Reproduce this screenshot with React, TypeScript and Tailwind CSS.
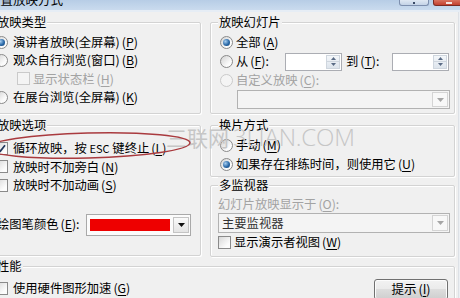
import React from "react";

const M = ({ k }: { k: string }) => (
  <span className="ml-[2px]">
    (<span className="underline underline-offset-2">{k}</span>)
  </span>
);

function Radio({ checked = false, disabled = false }: { checked?: boolean; disabled?: boolean }) {
  return (
    <span
      className={`flex h-[13px] w-[13px] shrink-0 items-center justify-center rounded-full border ${
        disabled
          ? "border-[#cacaca] bg-[#f4f4f4]"
          : "border-[#8a8a8a] bg-[linear-gradient(135deg,#d2d2d2,#fbfbfb_70%)]"
      }`}
    >
      {checked && (
        <span className="h-[7px] w-[7px] rounded-full bg-[radial-gradient(circle_at_35%_35%,#a6cdef,#2a69a8_55%,#123e6c)]" />
      )}
    </span>
  );
}

function Check({ checked = false, disabled = false }: { checked?: boolean; disabled?: boolean }) {
  return (
    <span
      className={`flex h-[13px] w-[13px] shrink-0 items-center justify-center border ${
        disabled
          ? "border-[#cacaca] bg-[#f4f4f4]"
          : "border-[#8a8a8a] bg-[linear-gradient(135deg,#d8d8d8,#fcfcfc_75%)]"
      }`}
    >
      {checked && (
        <svg width="9" height="9" viewBox="0 0 9 9">
          <path d="M1 4.6L3.4 7.2L8 1.2" fill="none" stroke="#22375c" strokeWidth="1.7" />
        </svg>
      )}
    </span>
  );
}

function Group({
  label,
  className = "",
  children,
}: {
  label: string;
  className?: string;
  children?: React.ReactNode;
}) {
  return (
    <div
      className={`relative shrink-0 rounded-[2px] border border-[#d3d3d3] shadow-[inset_1px_1px_0_#ffffff,1px_1px_0_#ffffff] ${className}`}
    >
      <span className="absolute left-[7px] top-[-9px] bg-[#f0f0f0] px-[1px] leading-[17px] text-black">
        {label}
      </span>
      {children}
    </div>
  );
}

function Spinner() {
  return (
    <div className="flex h-[18px] w-[57px] shrink-0 border border-[#abadb3] bg-white p-[1px]">
      <div className="flex-1" />
      <div className="flex w-[14px] flex-col border border-[#cfd6de] bg-[linear-gradient(#f4f7fa,#dde4ec)]">
        <div className="flex flex-1 items-center justify-center border-b border-[#cfd6de]">
          <svg width="5" height="3" viewBox="0 0 5 3">
            <path d="M0 3L2.5 0L5 3Z" fill="#5a6b85" />
          </svg>
        </div>
        <div className="flex flex-1 items-center justify-center">
          <svg width="5" height="3" viewBox="0 0 5 3">
            <path d="M0 0L2.5 3L5 0Z" fill="#5a6b85" />
          </svg>
        </div>
      </div>
    </div>
  );
}

function Combo({ text = "", className = "" }: { text?: string; className?: string }) {
  return (
    <div className={`flex items-center border border-[#b2b2b2] bg-[#f4f4f4] p-[1px] ${className}`}>
      <span className="flex-1 pl-[2px] leading-[15px] text-[#333333]">{text}</span>
      <span className="flex h-full w-[16px] items-center justify-center border border-[#d4d4d4] bg-[#f8f8f8]">
        <svg width="7" height="4" viewBox="0 0 7 4">
          <path d="M0 0L3.5 4L7 0Z" fill="#a6a6a6" />
        </svg>
      </span>
    </div>
  );
}

export default function App() {
  const dis = "text-[#a3a3a3]";
  return (
    <div className="relative flex h-[298px] w-[460px] flex-col overflow-hidden bg-[#f0f0f0] font-['Noto_Sans_CJK_SC','Noto_Sans',sans-serif] text-[12.3px] text-black">
      {/* title bar */}
      <div className="flex h-[10px] shrink-0 overflow-hidden bg-[linear-gradient(#b7cde6,#cadbee)]">
        <span className="ml-[-12px] mt-[-7px] whitespace-nowrap text-[12.5px] leading-[13px]">设置放映方式</span>
        <div className="ml-auto mr-[-4px] flex gap-[4px]">
          <div className="flex h-[6px] w-[30px] items-end justify-center rounded-b-[3px] border border-t-0 border-[#7d8fae] bg-[linear-gradient(#dfe8f3,#c4d3e6)]">
            <span className="mb-[1px] h-[2px] w-[2px] bg-[#3a4a66]" />
          </div>
          <div className="flex h-[6px] w-[31px] items-end justify-center rounded-b-[3px] border border-t-0 border-[#7a2a22] bg-[linear-gradient(#d9725f,#c2402f)]">
            <span className="mb-[1px] h-[2px] w-[6px] bg-[#f5e4e0]" />
          </div>
        </div>
      </div>
      <div className="h-[2px] shrink-0 bg-[#e6edf5]" />

      <div className="flex flex-1">
        <div className="flex w-[458px] shrink-0 flex-col">
          {/* two columns */}
          <div className="ml-[-12px] mt-[10px] flex gap-[9px]">
            {/* left column */}
            <div className="flex w-[213px] shrink-0 flex-col">
              <Group label="放映类型" className="h-[92px]">
                <div className="flex flex-col pl-[6px] pt-[10px]">
                  <div className="flex h-[18.3px] items-center gap-[5px] whitespace-nowrap">
                    <Radio checked />
                    <span>
                      演讲者放映(全屏幕)
                      <M k="P" />
                    </span>
                  </div>
                  <div className="flex h-[18.3px] items-center gap-[5px] whitespace-nowrap">
                    <Radio />
                    <span>
                      观众自行浏览(窗口)
                      <M k="B" />
                    </span>
                  </div>
                  <div className="ml-[22px] flex h-[18.3px] items-center gap-[3px] whitespace-nowrap">
                    <Check disabled />
                    <span className={dis}>
                      显示状态栏
                      <M k="H" />
                    </span>
                  </div>
                  <div className="flex h-[18.3px] items-center gap-[5px] whitespace-nowrap">
                    <Radio />
                    <span>
                      在展台浏览(全屏幕)
                      <M k="K" />
                    </span>
                  </div>
                </div>
              </Group>

              <Group label="放映选项" className="mt-[11px] h-[131px]">
                <div className="flex flex-col pl-[6px] pt-[13px]">
                  <div className="flex h-[18.5px] items-center gap-[5px] whitespace-nowrap">
                    <Check checked />
                    <span>
                      循环放映，按 <span className="text-[11px]">ESC</span> 键终止
                      <M k="L" />
                    </span>
                  </div>
                  <div className="flex h-[18.5px] items-center gap-[5px] whitespace-nowrap">
                    <Check />
                    <span>
                      放映时不加旁白
                      <M k="N" />
                    </span>
                  </div>
                  <div className="flex h-[18.5px] items-center gap-[5px] whitespace-nowrap">
                    <Check />
                    <span>
                      放映时不加动画
                      <M k="S" />
                    </span>
                  </div>
                  <div className="mt-[19px] flex h-[22px] items-center whitespace-nowrap">
                    <span className="ml-[2px] w-[89px]">
                      绘图笔颜色
                      <M k="E" />:
                    </span>
                    <div className="flex h-[22px] w-[105px] items-center border border-[#a9a9a9] bg-[#fbfbfb] pl-[3px] pr-[1px]">
                      <div className="h-[12px] w-[80px] bg-[#ee0000]" />
                      <div className="ml-auto flex h-[16px] w-[16px] items-center justify-center border border-[#c4c4c4] bg-[linear-gradient(#fafafa,#e4e4e4)]">
                        <svg width="7" height="4" viewBox="0 0 7 4">
                          <path d="M0 0L3.5 4L7 0Z" fill="#111111" />
                        </svg>
                      </div>
                    </div>
                  </div>
                </div>
              </Group>
            </div>

            {/* right column */}
            <div className="flex w-[245px] shrink-0 flex-col">
              <Group label="放映幻灯片" className="h-[92px]">
                <div className="flex flex-col pl-[9px] pt-[10px]">
                  <div className="flex h-[19px] items-center gap-[3px] whitespace-nowrap">
                    <Radio checked />
                    <span>
                      全部
                      <M k="A" />
                    </span>
                  </div>
                  <div className="flex h-[19px] items-center whitespace-nowrap">
                    <Radio />
                    <span className="ml-[3px] w-[49px]">
                      从<M k="F" />:
                    </span>
                    <Spinner />
                    <span className="ml-[4px] w-[46px]">
                      到<M k="T" />:
                    </span>
                    <Spinner />
                  </div>
                  <div className="flex h-[19px] items-center gap-[3px] whitespace-nowrap">
                    <Radio disabled />
                    <span className={dis}>
                      自定义放映
                      <M k="C" />:
                    </span>
                  </div>
                  <Combo className="ml-[17px] h-[19px] w-[213px]" />
                </div>
              </Group>

              <Group label="换片方式" className="mt-[11px] h-[52px]">
                <div className="flex flex-col pl-[9px] pt-[10px]">
                  <div className="flex h-[19px] items-center gap-[3px] whitespace-nowrap">
                    <Radio />
                    <span>
                      手动
                      <M k="M" />
                    </span>
                  </div>
                  <div className="flex h-[19px] items-center gap-[3px] whitespace-nowrap">
                    <Radio checked />
                    <span>
                      如果存在排练时间，则使用它
                      <M k="U" />
                    </span>
                  </div>
                </div>
              </Group>

              <Group label="多监视器" className="mt-[8px] h-[72px]">
                <div className="flex flex-col pl-[7px] pt-[9px]">
                  <div className={`flex h-[18px] items-center whitespace-nowrap ${dis}`}>
                    幻灯片放映显示于
                    <M k="O" />:
                  </div>
                  <Combo text="主要监视器" className="h-[20px] w-[232px]" />
                  <div className="flex h-[18px] items-center gap-[3px] whitespace-nowrap">
                    <Check />
                    <span>
                      显示演示者视图
                      <M k="W" />
                    </span>
                  </div>
                </div>
              </Group>
            </div>
          </div>

          {/* performance */}
          <Group label="性能" className="ml-[-12px] mt-[9px] h-[60px] w-[467px]">
            <div className="flex items-start pl-[6px] pr-[6px] pt-[12px]">
              <div className="flex h-[18px] items-center gap-[5px] whitespace-nowrap">
                <Check />
                <span>
                  使用硬件图形加速
                  <M k="G" />
                </span>
              </div>
              <button className="ml-auto flex h-[21px] w-[74px] items-center justify-center rounded-[3px] border border-[#707070] bg-[linear-gradient(#f2f2f2,#ebebeb_45%,#dddddd_50%,#cfcfcf)] text-[12.5px] leading-none shadow-[inset_0_0_0_1px_#fcfcfc]">
                提示
                <M k="I" />
              </button>
            </div>
          </Group>
        </div>
        <div className="w-px shrink-0 bg-[#dde1e6]" />
        <div className="flex-1 bg-[#eceff3]" />
      </div>

      {/* watermark */}
      <div className="pointer-events-none absolute left-[166px] top-[124px] flex items-baseline whitespace-nowrap text-[#c6c6c6]">
        <span className="text-[21px] leading-[26px]">三联网</span>
        <span className="ml-[4px] font-['Open_Sans',sans-serif] text-[24px] font-light leading-[26px] tracking-[-0.2px]">
          3LIAN.COM
        </span>
      </div>

      {/* red ellipse annotation */}
      <svg
        className="pointer-events-none absolute left-0 top-[125px]"
        width="200"
        height="40"
        viewBox="0 0 200 40"
      >
        <ellipse
          cx="88"
          cy="20.5"
          rx="102"
          ry="12.5"
          transform="rotate(-1.5 88 20.5)"
          fill="none"
          stroke="#a93a3e"
          strokeWidth="1.5"
        />
      </svg>
    </div>
  );
}
